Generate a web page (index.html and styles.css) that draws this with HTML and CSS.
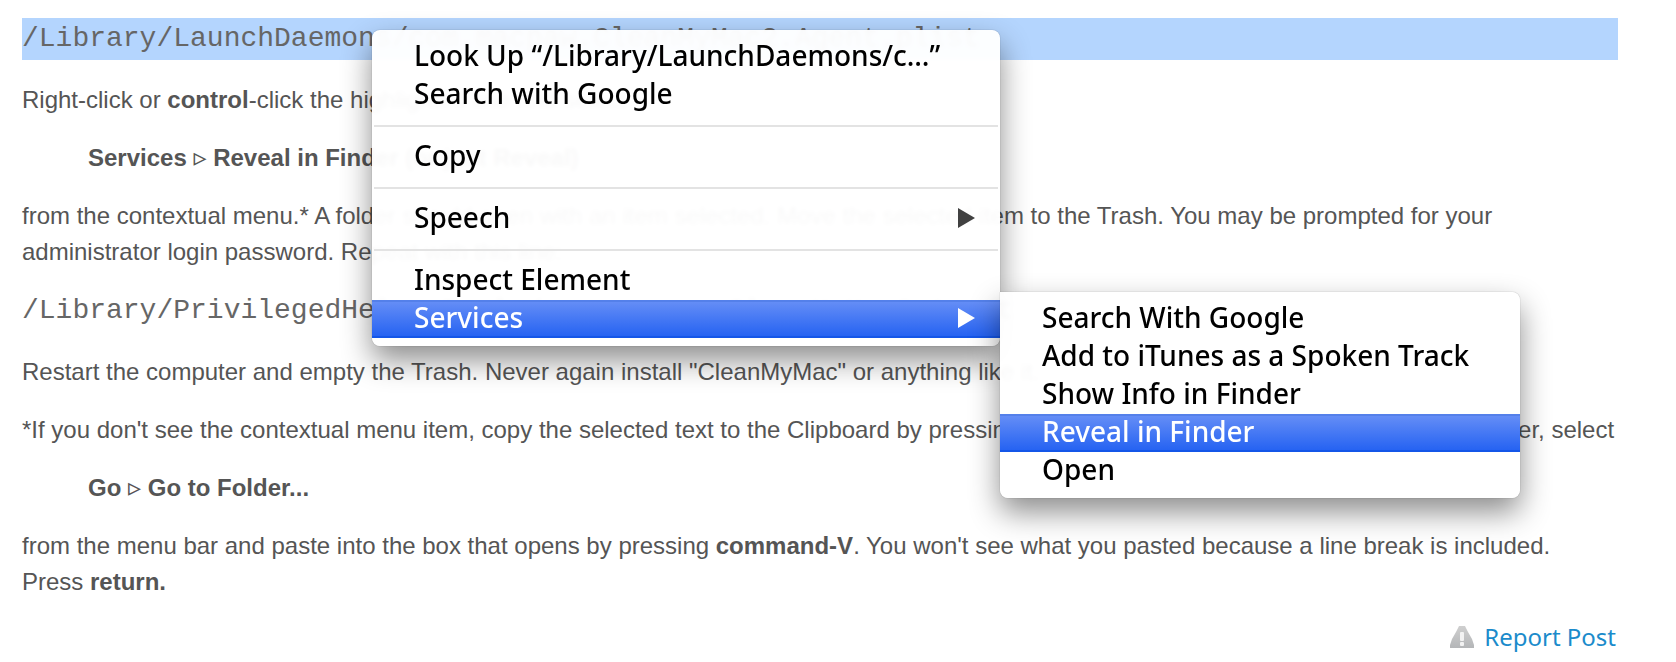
FILE: index.html
```html
<!DOCTYPE html>
<html lang="en">
<head>
    <meta charset="UTF-8">
    <meta name="viewport" content="width=device-width, initial-scale=1.0">
    <title>Report Post</title>
    <link rel="stylesheet" href="styles.css">
</head>
<body>
    <main class="post">
        <pre class="path selected">/Library/LaunchDaemons/com.macpaw.CleanMyMac2.Agent.plist</pre>
        <p>Right-click or <strong>control</strong>-click the highlighted line and select</p>
        <p class="step">Services <span class="arrow">▹</span> Reveal in Finder (or just Reveal)</p>
        <p>from the contextual menu.* A folder should open with an item selected. Move the selected item to the Trash. You may be prompted for your administrator login password. Repeat with this line:</p>
        <pre class="path">/Library/PrivilegedHelperTools/com.macpaw.CleanMyMac2.Agent</pre>
        <p>Restart the computer and empty the Trash. Never again install "CleanMyMac" or anything like it.</p>
        <p>*If you don't see the contextual menu item, copy the selected text to the Clipboard by pressing the key combination <strong>command-C</strong>.&nbsp; In the Finder, select</p>
        <p class="step">Go <span class="arrow">▹</span> Go to Folder...</p>
        <p>from the menu bar and paste into the box that opens by pressing <strong>command-V</strong>. You won't see what you pasted because a line break is included. Press <strong>return.</strong></p>
        <footer class="post-footer">
            <a class="report" href="#">
                <svg class="report-icon" viewBox="0 0 24 22" aria-hidden="true">
                    <defs>
                        <linearGradient id="grey" x1="0" y1="0" x2="0" y2="1">
                            <stop offset="0" stop-color="#cfcfcf"/>
                            <stop offset="1" stop-color="#b4b6b8"/>
                        </linearGradient>
                    </defs>
                    <path d="M9 0h6l3 6 4 7 2 6v3H0v-3l2-6 4-7z" fill="url(#grey)"/>
                    <rect x="10" y="6" width="4" height="9" rx="1" fill="#f2f2f2"/>
                    <rect x="10" y="16" width="4" height="4" rx="1" fill="#f2f2f2"/>
                </svg>
                Report Post
            </a>
        </footer>
    </main>

    <div class="menu context-menu" role="menu">
        <button type="button" role="menuitem">Look Up “/Library/LaunchDaemons/c…”</button>
        <button type="button" role="menuitem">Search with Google</button>
        <hr>
        <button type="button" role="menuitem">Copy</button>
        <hr>
        <button type="button" role="menuitem" class="has-submenu">Speech</button>
        <hr>
        <button type="button" role="menuitem">Inspect Element</button>
        <button type="button" role="menuitem" class="has-submenu active">Services</button>
    </div>

    <div class="menu services-menu" role="menu">
        <button type="button" role="menuitem">Search With Google</button>
        <button type="button" role="menuitem">Add to iTunes as a Spoken Track</button>
        <button type="button" role="menuitem">Show Info in Finder</button>
        <button type="button" role="menuitem" class="active">Reveal in Finder</button>
        <button type="button" role="menuitem">Open</button>
    </div>
</body>
</html>
```
FILE: styles.css
```css
body {
    margin: 0;
    background-color: #fff;
    color: #555;
    font-family: Helvetica, "Liberation Sans", Arial, sans-serif;
    font-size: 24px;
    line-height: 36px;
}

.post {
    padding: 18px 58px 0 22px;
}

.post p {
    margin: 22px 0;
}

.post .step {
    margin-left: 66px;
    font-weight: bold;
}

.arrow {
    font-family: "DejaVu Sans", sans-serif;
    font-weight: normal;
    font-size: 26px;
    line-height: 1;
}

.path {
    margin: 0;
    padding-bottom: 2px;
    color: #666;
    font-family: Courier, "Liberation Mono", "Courier New", monospace;
    font-size: 28px;
    line-height: 38px;
}

.selected {
    padding-top: 2px;
    background-color: #b4d5fe;
}

.post-footer {
    display: flex;
    justify-content: flex-end;
    padding-right: 2px;
    line-height: 30px;
}

.report {
    display: flex;
    align-items: center;
    gap: 10px;
    color: #1b8bcb;
    font-family: "Lucida Grande", "Noto Sans", sans-serif;
    text-decoration: none;
}

.report-icon {
    width: 24px;
    height: 22px;
}

/* menus */
.menu {
    position: absolute;
    box-sizing: border-box;
    padding: 8px 0;
    border-radius: 8px;
    background-color: rgba(255, 255, 255, 0.96);
    backdrop-filter: blur(2px);
    box-shadow: 0 0 1px rgba(0, 0, 0, 0.5), 0 14px 30px rgba(0, 0, 0, 0.45);
}

.context-menu {
    top: 30px;
    left: 372px;
    width: 628px;
}

.services-menu {
    top: 292px;
    left: 1000px;
    width: 520px;
    border-top-left-radius: 0;
}

.menu button {
    display: flex;
    align-items: center;
    justify-content: space-between;
    width: 100%;
    height: 38px;
    padding: 0 25px 4px 42px;
    border: none;
    background: none;
    color: #000;
    font-family: "Lucida Grande", "Noto Sans", sans-serif;
    font-size: 28px;
    font-weight: 500;
    text-align: left;
    white-space: nowrap;
}

.menu .active {
    border-top: 2px solid #5480ea;
    border-bottom: 2px solid #1456e8;
    background: linear-gradient(#648df6, #2663f2);
    color: #fff;
}

.has-submenu::after {
    content: "";
    margin-top: 2px;
    border-left: 17px solid #404040;
    border-top: 10px solid transparent;
    border-bottom: 10px solid transparent;
}

.has-submenu.active::after {
    border-left-color: #fff;
}

.menu hr {
    height: 2px;
    margin: 11px 2px;
    border: none;
    background-color: #e3e3e3;
}
```
